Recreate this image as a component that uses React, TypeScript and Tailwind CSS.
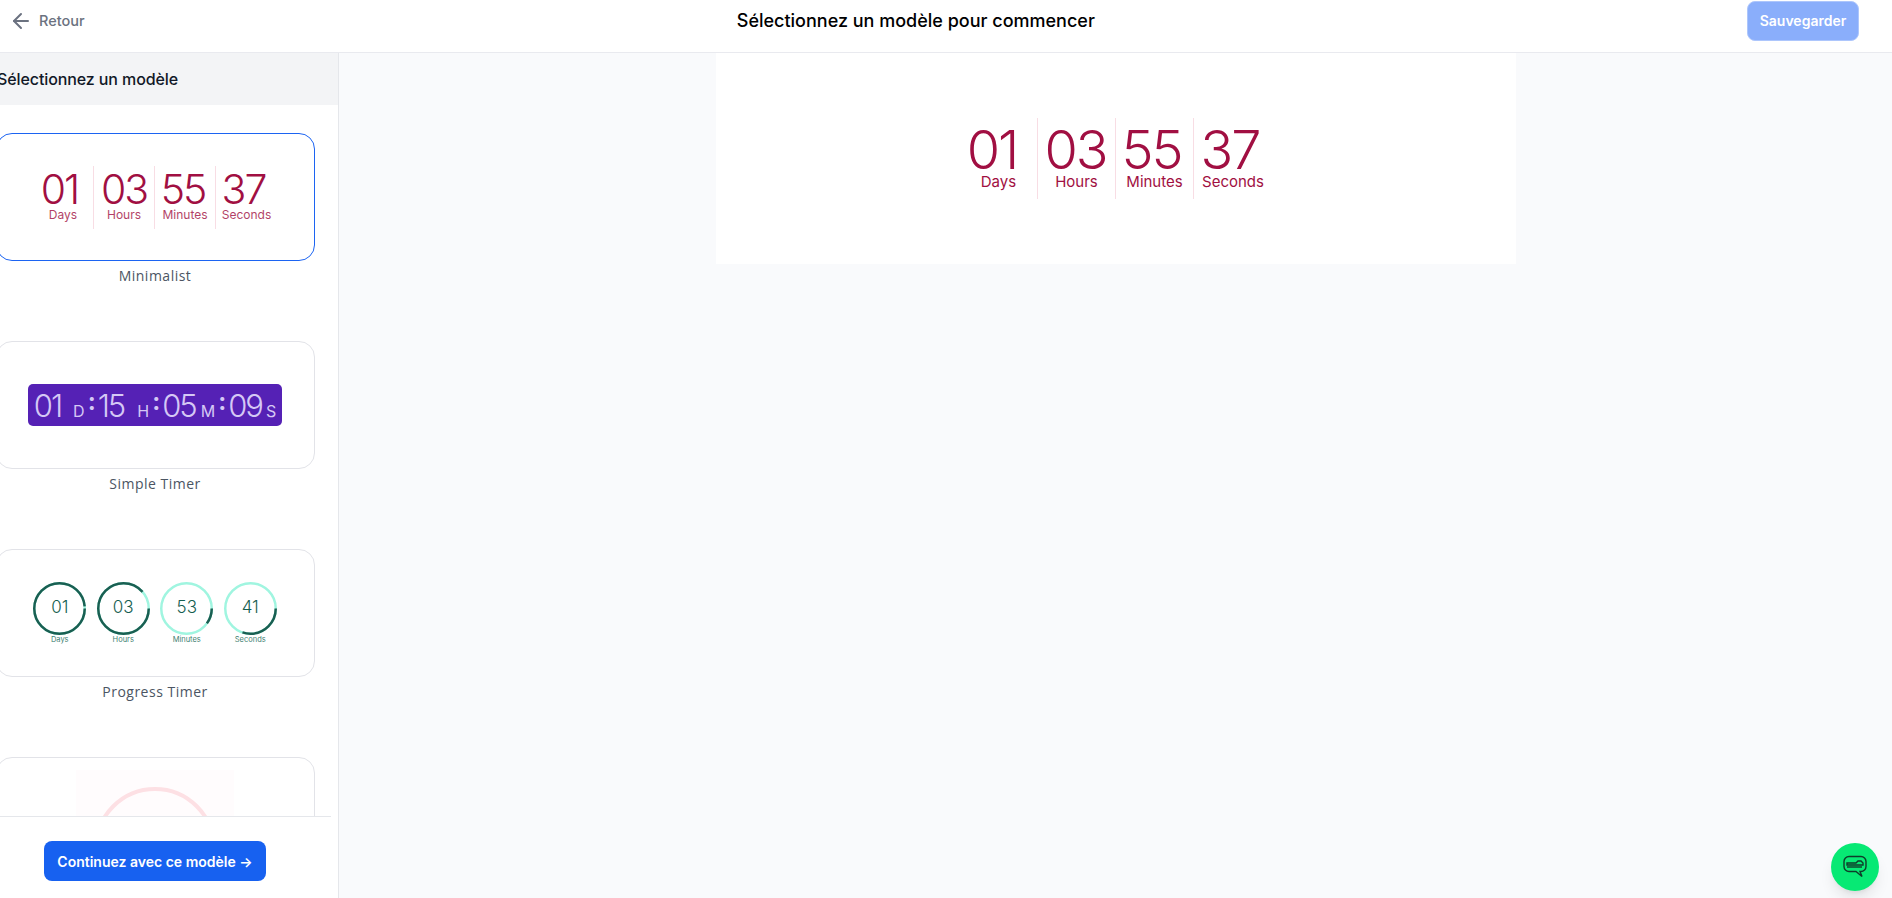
import { ArrowLeft } from 'lucide-react';

const inter = 'font-["Inter",sans-serif]';

const units = [
  { value: '01', label: 'Days', big: '-ml-[12px]', thumb: '-ml-[7px]' },
  { value: '03', label: 'Hours', big: '-ml-[1px]', thumb: 'ml-0' },
  { value: '55', label: 'Minutes', big: '-ml-[5px]', thumb: '-ml-[4px]' },
  { value: '37', label: 'Seconds', big: '-ml-[5px]', thumb: '-ml-[6px]' },
];

function MinimalTimer({ small }: { small?: boolean }) {
  return (
    <div className={`flex ${inter} text-[#a10f42]`}>
      {units.map((unit, i) => (
        <div
          key={unit.label}
          className={`flex flex-col items-center ${small ? 'h-[63px] w-[61px] pt-[5px]' : 'h-[81px] w-[78px] pt-[8px]'} ${
            i < 3 ? 'border-r border-[#f8dde4]' : ''
          }`}
        >
          <span
            className={
              small
                ? `${unit.thumb} text-[41px] leading-[37px] font-[350] tracking-[-2px]`
                : `${unit.big} text-[54px] leading-[47px] font-[350] tracking-[-2px]`
            }
          >
            {unit.value}
          </span>
          <span className={small ? 'text-[12px] leading-[14px] opacity-80' : 'ml-[1px] text-[15px] leading-[18px]'}>
            {unit.label}
          </span>
        </div>
      ))}
    </div>
  );
}

function SimpleTimer() {
  const parts = [
    ['01', 'D'],
    ['15', 'H'],
    ['05', 'M'],
    ['09', 'S'],
  ];
  return (
    <div className={`flex h-[42px] w-[254px] items-center justify-center rounded-[5px] bg-[#5521b5] pt-[2px] ${inter} text-[#d5c8f5]`}>
      {parts.map(([value, letter], i) => (
        <div key={letter} className="flex items-baseline">
          <span className="text-[31px] leading-[38px] font-[350] tracking-[-2px]">{value}</span>
          <span className={`text-[16px] leading-[14px] ${i === 0 ? 'ml-[12px]' : i === 1 ? 'ml-[13px]' : i === 2 ? 'ml-[5px]' : 'ml-[4px]'}`}>
            {letter}
          </span>
          {i < 3 && <span className="relative -top-[7px] mr-[2px] ml-[3px] text-[24px] leading-[24px] font-bold">:</span>}
        </div>
      ))}
    </div>
  );
}

function Ring({ value, label, progress }: { value: string; label: string; progress: number }) {
  const r = 25.25;
  const c = 2 * Math.PI * r;
  return (
    <div className="flex w-[63.5px] flex-col items-center">
      <div className="relative h-[53px] w-[53px]">
        <svg width="53" height="53" viewBox="0 0 53 53">
          <circle cx="26.5" cy="26.5" r={r} fill="none" stroke="#a0f5e0" strokeWidth="2.5" />
          <circle
            cx="26.5"
            cy="26.5"
            r={r}
            fill="none"
            stroke="#1a5f52"
            strokeWidth="2.5"
            strokeDasharray={`${c * progress} ${c}`}
          />
        </svg>
        <span className={`absolute inset-0 flex items-center justify-center ${inter} text-[17px] font-light text-[#155e50]`}>
          {value}
        </span>
      </div>
      <span className={`${inter} text-[7.5px] leading-[10px] text-[#3f7f72]`}>{label}</span>
    </div>
  );
}

function ProgressTimer() {
  return (
    <div className="flex">
      <Ring value="01" label="Days" progress={0.98} />
      <Ring value="03" label="Hours" progress={0.88} />
      <Ring value="53" label="Minutes" progress={0.1} />
      <Ring value="41" label="Seconds" progress={0.3} />
    </div>
  );
}

function TemplateCard({
  name,
  selected,
  children,
}: {
  name?: string;
  selected?: boolean;
  children: React.ReactNode;
}) {
  return (
    <div className="mb-[40px] w-[319px] shrink-0">
      <div
        className={`flex h-[128px] items-center justify-center overflow-hidden rounded-[16px] border bg-white pr-[1px] ${
          selected ? 'border-[#1c64f2]' : 'border-[#e2e3e8]'
        }`}
      >
        {children}
      </div>
      {name && (
        <p className='mt-[5px] h-[35px] pr-[1px] text-center font-["Open_Sans",sans-serif] text-[14px] leading-[20px] font-medium tracking-[0.5px] text-[#4b5563]'>
          {name}
        </p>
      )}
    </div>
  );
}

export default function App() {
  return (
    <div className={`flex h-screen flex-col overflow-hidden bg-white ${inter}`}>
      {/* Header */}
      <header className="flex h-[53px] shrink-0 items-center justify-between border-b border-[#e9eaef] bg-white pr-[33px] pb-[11px] pl-[9px]">
        <button className="flex items-center gap-[6px] text-[14.5px] font-medium text-[#6b7280]">
          <ArrowLeft className="h-[24px] w-[24px]" strokeWidth={2} />
          Retour
        </button>
        <h1 className="text-[18px] font-[450] text-black">Sélectionnez un modèle pour commencer</h1>
        <button className="h-[40px] w-[112px] rounded-[8px] border border-[#adc6fc] bg-[#8aaefb] text-[14px] font-semibold text-white">
          Sauvegarder
        </button>
      </header>

      <div className="flex min-h-0 flex-1">
        {/* Sidebar */}
        <aside className="flex w-[339px] shrink-0 flex-col overflow-hidden border-r border-[#e5e7eb] bg-white">
          <div className="flex h-[52px] shrink-0 items-center bg-[#f3f4f6]">
            <h2 className="-ml-[3px] text-[16px] font-[450] tracking-[-0.1px] whitespace-nowrap text-[#111827]">Sélectionnez un modèle</h2>
          </div>
          <div className="-ml-[4px] flex min-h-0 flex-1 flex-col overflow-hidden pt-[28px]">
            <TemplateCard name="Minimalist" selected>
              <MinimalTimer small />
            </TemplateCard>
            <TemplateCard name="Simple Timer">
              <SimpleTimer />
            </TemplateCard>
            <TemplateCard name="Progress Timer">
              <ProgressTimer />
            </TemplateCard>
            <TemplateCard>
              <div className="h-[102px] w-[158px] bg-[#fffcfd]">
                <svg width="158" height="102" viewBox="0 0 158 102">
                  <circle cx="79" cy="78" r="59" fill="none" stroke="#fde0e4" strokeWidth="4" />
                </svg>
              </div>
            </TemplateCard>
          </div>
          <div className="flex h-[82px] w-[331px] shrink-0 items-start justify-center border-t border-[#e5e7eb] bg-white pt-[24px]">
            <button className="-ml-[21px] h-[40px] w-[222px] rounded-[8px] bg-[#1761f0] text-[14px] font-semibold text-white">
              Continuez avec ce modèle →
            </button>
          </div>
        </aside>

        {/* Preview */}
        <main className="flex min-w-0 flex-1 justify-center bg-[#f9fafc]">
          <div className="flex h-[211px] w-[800px] justify-center bg-white pt-[65px]">
            <MinimalTimer />
          </div>
        </main>
      </div>

      {/* Chat bubble */}
      <button className="fixed right-[13px] bottom-[7px] flex h-[48px] w-[48px] items-center justify-center rounded-full bg-[#07e974] shadow-lg">
        <svg width="26" height="26" viewBox="0 0 26 26" fill="none" stroke="#0f3d2a" strokeWidth="1.4">
          <path d="M7 2.5h12a5 5 0 0 1 5 5v5a5 5 0 0 1-5 5h-1l2 5-6-5H7a5 5 0 0 1-5-5v-5a5 5 0 0 1 5-5z" />
          <path d="M5 9h9l2-2h3l2 2v2H5z" />
          <path d="M5 13h15" />
        </svg>
      </button>
    </div>
  );
}
